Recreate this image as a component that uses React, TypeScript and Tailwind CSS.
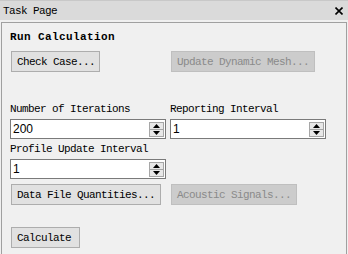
import React from "react";

const mono = "font-['Liberation_Mono',monospace] text-[11px] tracking-[-0.6px] leading-[12px]";

const Spinner = () => (
  <div className="mr-px flex h-[15px] w-[15px] flex-col border border-[#a6a6a6] bg-[#e8e8e8]">
    <div className="flex flex-1 items-center justify-center border-b border-[#a6a6a6]">
      <svg width="7" height="4" viewBox="0 0 7 4">
        <path d="M3.5 0 L7 4 L0 4 Z" fill="#000" />
      </svg>
    </div>
    <div className="flex flex-1 items-center justify-center">
      <svg width="7" height="4" viewBox="0 0 7 4">
        <path d="M0 0 L7 0 L3.5 4 Z" fill="#000" />
      </svg>
    </div>
  </div>
);

const NumberField = ({ value }: { value: string }) => (
  <div className="flex h-[20px] w-[156px] items-center border border-[#7a7a7a] bg-white">
    <span className="flex-1 pl-[2px] font-['Liberation_Sans',sans-serif] text-[12px] leading-[12px] text-black">
      {value}
    </span>
    <Spinner />
  </div>
);

const Button = ({
  label,
  width,
  disabled,
}: {
  label: string;
  width: string;
  disabled?: boolean;
}) => (
  <button
    className={
      disabled
        ? `${width} h-[21px] border border-[#bfbfbf] bg-[#cccccc] pl-[5px] text-left text-[#8a8a8a] ${mono}`
        : `${width} h-[21px] border border-[#adadad] bg-[#e1e1e1] pl-[5px] text-left text-black ${mono}`
    }
  >
    {label}
  </button>
);

export default function App() {
  return (
    <div className="flex h-[254px] w-[348px] flex-col overflow-hidden bg-[#f0f0f0]">
      {/* title bar */}
      <div className="flex h-[20px] items-center justify-between border-t border-[#c8c8c8] bg-[#dadada] pl-[3px] pr-[5px]">
        <span className={`${mono} text-black`}>Task Page</span>
        <svg width="8" height="8" viewBox="0 0 8 8">
          <path d="M0.5 0.5 L7.5 7.5 M7.5 0.5 L0.5 7.5" stroke="#000" strokeWidth="1.6" />
        </svg>
      </div>

      {/* panel */}
      <div className="mx-px mt-[2px] flex flex-1 flex-col border-x border-t border-[#a0a0a0] bg-[#f0f0f0] pl-[8px] pt-[8px]">
        <div className="h-[12px] font-['Liberation_Mono',monospace] text-[11px] font-bold leading-[12px] tracking-[0.4px] text-black">
          Run Calculation
        </div>

        <div className="ml-px mt-[8px] flex gap-[71px]">
          <Button label="Check Case..." width="w-[89px]" />
          <Button label="Update Dynamic Mesh..." width="w-[144px]" disabled />
        </div>

        <div className="mt-[31px] grid grid-cols-[156px_156px] gap-x-[4px]">
          <div className={`${mono} text-black`}>Number of Iterations</div>
          <div className={`${mono} text-black`}>Reporting Interval</div>
          <div className="mt-[4px]">
            <NumberField value="200" />
          </div>
          <div className="mt-[4px]">
            <NumberField value="1" />
          </div>
          <div className={`${mono} mt-[4px] text-black`}>Profile Update Interval</div>
          <div />
          <div className="mt-[4px]">
            <NumberField value="1" />
          </div>
        </div>

        <div className="ml-px mt-[5px] flex gap-[10px]">
          <Button label="Data File Quantities..." width="w-[150px]" />
          <Button label="Acoustic Signals..." width="w-[126px]" disabled />
        </div>

        <div className="ml-px mt-[22px] flex">
          <Button label="Calculate" width="w-[69px]" />
        </div>
      </div>
    </div>
  );
}
